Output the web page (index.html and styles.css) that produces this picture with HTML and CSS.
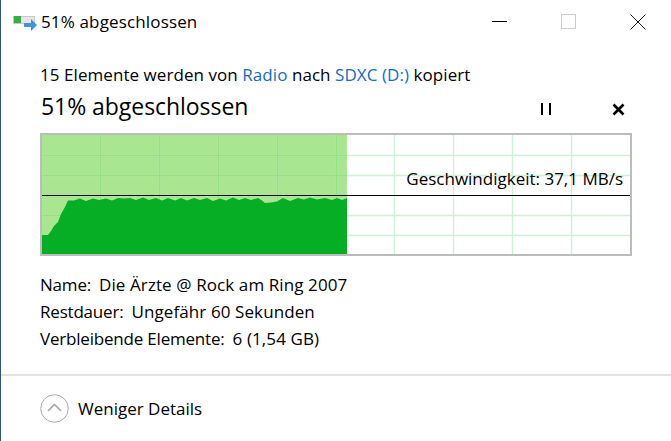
FILE: index.html
```html
<!DOCTYPE html>
<html lang="de">
<head>
    <meta charset="UTF-8">
    <meta name="viewport" content="width=device-width, initial-scale=1.0">
    <title>51% abgeschlossen</title>
    <link rel="stylesheet" href="styles.css">
</head>
<body>
    <div class="window">
        <header class="titlebar">
            <svg class="app-icon" width="24" height="20" viewBox="0 0 24 20">
                <rect x="0.5" y="1.5" width="21" height="7" fill="#e6e6e6" stroke="#c8c8c8"/>
                <rect x="1" y="1" width="7" height="7" fill="#36b03a"/>
                <path d="M11 8h7V4l6 6-6 6v-4h-7z" fill="#3d94e3"/>
            </svg>
            <span class="title-text">51% abgeschlossen</span>
            <div class="window-buttons">
                <svg class="win-btn" width="16" height="16" viewBox="0 0 16 16"><path d="M0 7.5h15" stroke="#000"/></svg>
                <svg class="win-btn" width="16" height="16" viewBox="0 0 16 16"><rect x="0.5" y="0.5" width="14" height="14" fill="none" stroke="#cccccc"/></svg>
                <svg class="win-btn" width="16" height="16" viewBox="0 0 16 16"><path d="M0.5 0.5l15 15M15.5 0.5l-15 15" stroke="#000" stroke-width="0.9"/></svg>
            </div>
        </header>

        <main class="content">
            <p class="copy-line">15 Elemente werden von <a href="#">Radio</a> nach <a href="#">SDXC (D:)</a> kopiert</p>
            <div class="progress-head">
                <h1>51% abgeschlossen</h1>
                <svg class="pause" width="12" height="12" viewBox="0 0 12 12"><path d="M0 0h2v12H0zM8 0h2v12H8z" fill="#000"/></svg>
                <svg class="cancel" width="13" height="13" viewBox="0 0 13 13"><path d="M1.5 1.5l10 10M11.5 1.5l-10 10" stroke="#000" stroke-width="2.6"/></svg>
            </div>

            <div class="graph">
                <svg width="588" height="119" viewBox="42 135 588 119">
                    <rect x="42" y="135" width="305" height="119" fill="#aae68f"/>
                    <g stroke="#cdf0d6" stroke-width="1.4">
                        <path d="M42 155.5H630M42 175.5H630M42 215.5H630M42 235.5H630"/>
                        <path d="M100.5 135V254M159.5 135V254M218.5 135V254M277.5 135V254M336.5 135V254M394.5 135V254M453.5 135V254M512.5 135V254M571.5 135V254"/>
                    </g>
                    <g stroke="#96e085" stroke-width="1.4">
                        <path d="M42 155.5H347M42 175.5H347M42 215.5H347M42 235.5H347"/>
                        <path d="M100.5 135V254M159.5 135V254M218.5 135V254M277.5 135V254M336.5 135V254"/>
                    </g>
                    <polygon fill="#06ae25" points="42,254 42,235 48,235 51,231 54,226 58,222 61,214 65,207 68,200.5 74,200.5 80,198.5 86,201 93,198.5 99,200 106,198.5 112,200.5 118,198 124,198.5 130,198 136,200 143,197.5 149,200 156,198 162,200.5 168,198 175,200.5 181,198 187,200.5 194,198 200,200 207,198 213,201 220,198.5 226,200.5 233,197.5 239,200 245,198 251,200 258,198 262,200.5 265,203 271,202.5 277,201.5 283,198 290,201 298,198 304,199.5 310,197.5 317,199.5 325,198 332,200 337,198 342,200 347,198 347,254"/>
                    <path d="M42 195.5H630" stroke="#000" stroke-width="1.2"/>
                </svg>
                <span class="speed">Geschwindigkeit: 37,1 MB/s</span>
            </div>

            <dl class="details">
                <div class="detail-row"><dt>Name:</dt><dd>Die Ärzte @ Rock am Ring 2007</dd></div>
                <div class="detail-row"><dt>Restdauer:</dt><dd>Ungefähr 60 Sekunden</dd></div>
                <div class="detail-row"><dt>Verbleibende Elemente:</dt><dd>6 (1,54 GB)</dd></div>
            </dl>
        </main>

        <footer class="footer">
            <svg class="toggle" width="29" height="29" viewBox="0 0 29 29">
                <circle cx="14.5" cy="14.5" r="13.8" fill="none" stroke="#aaaaaa" stroke-width="1"/>
                <path d="M8 17l6.5-6.5L21 17" fill="none" stroke="#a8a8a8" stroke-width="1.6"/>
            </svg>
            <span>Weniger Details</span>
        </footer>
    </div>
</body>
</html>
```

FILE: styles.css
```css
html, body {
    margin: 0;
    height: 100%;
    background-color: #fff;
}
body {
    font-family: "Open Sans", "Noto Sans", sans-serif;
    font-size: 17px;
    color: #000;
    overflow: hidden;
}
.window {
    height: 441px;
    box-sizing: border-box;
    border-left: 1px solid #34527a;
    display: flex;
    flex-direction: column;
}
.titlebar {
    height: 44px;
    display: flex;
    align-items: center;
    padding-left: 12px;
    box-sizing: border-box;
}
.app-icon {
    margin-right: 4px;
    margin-top: 6px;
}
.title-text {
    font-size: 17px;
    letter-spacing: 0.15px;
    margin-top: -2px;
}
.window-buttons {
    margin-left: auto;
    display: flex;
    gap: 53px;
    padding-right: 25px;
}
.content {
    padding: 20px 39px 0 39px;
    flex: 1;
}
.copy-line {
    margin: 0;
    line-height: 21px;
    letter-spacing: 0.06px;
}
.copy-line a {
    color: #0f6cd1;
    text-decoration: none;
}
.progress-head {
    display: flex;
    align-items: center;
    height: 32px;
    margin-top: 7px;
    margin-bottom: 9px;
    padding-left: 1px;
}
h1 {
    margin: -4px 0 0;
    font-size: 23px;
    font-weight: 400;
    letter-spacing: -0.05px;
}
.pause {
    margin-left: auto;
    margin-top: 2px;
}
.cancel {
    margin-left: 59px;
    margin-right: 7px;
    margin-top: 2px;
}
.graph {
    position: relative;
    width: 588px;
    height: 119px;
    border: 2px solid #bcbcbc;
    background-color: #fff;
}
.graph svg {
    display: block;
}
.speed {
    position: absolute;
    right: 7px;
    top: 34px;
    line-height: 20px;
}
.details {
    margin: 15px 0 0;
}
.detail-row {
    display: flex;
    gap: 8px;
    line-height: 27px;
}
.detail-row dt {
    letter-spacing: -0.2px;
}
.detail-row dd {
    margin: 0;
    letter-spacing: 0.1px;
}
.footer {
    height: 67px;
    box-sizing: border-box;
    border-top: 2px solid #e3e3e3;
    display: flex;
    align-items: center;
    gap: 9px;
    padding-left: 39px;
}
```
